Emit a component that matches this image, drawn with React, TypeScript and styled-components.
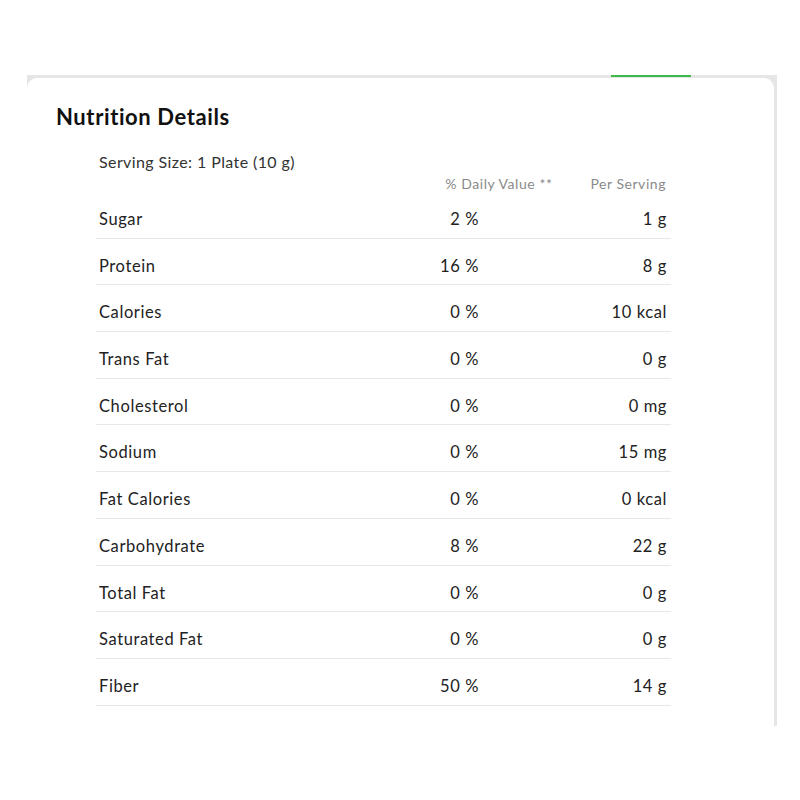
import styled, { createGlobalStyle } from 'styled-components';

const GlobalStyle = createGlobalStyle`
  html, body { margin: 0; padding: 0; background: #ffffff; }
  body { font-family: Lato, "Open Sans", Arial, sans-serif; color: #222; }
`;

const Frame = styled.div`
  position: relative;
  margin: 75px 0 0 27px;
  width: 750px;
  height: 651px;
  box-sizing: border-box;
  padding: 3px 3px 0 0;
  background: #e6e6e6;
`;

const TabIndicator = styled.div`
  position: absolute;
  top: 0;
  left: 584px;
  width: 80px;
  height: 2px;
  background: #3cb94a;
`;

const Card = styled.div`
  height: 100%;
  background: #ffffff;
  border-radius: 10px 10px 0 0;
  padding: 25px 0 0 29px;
  box-sizing: border-box;
`;

const Title = styled.h2`
  margin: 0;
  font-size: 22px;
  line-height: 28px;
  font-weight: 700;
  letter-spacing: 0.6px;
  color: #111;
`;

const Table = styled.div`
  width: 575px;
  margin: 21px 0 0 40px;
`;

const ServingSize = styled.div`
  padding-left: 3px;
  font-size: 16px;
  line-height: 20px;
  letter-spacing: 0.4px;
  color: #333;
`;

const HeaderRow = styled.div`
  display: flex;
  justify-content: flex-end;
  gap: 38px;
  padding: 0 5px 0 0;
  margin-top: 4px;
  font-size: 14px;
  line-height: 16px;
  letter-spacing: 0.55px;
  color: #8a8a8a;
`;

const Row = styled.div`
  display: grid;
  grid-template-columns: 1fr 120px 188px;
  box-sizing: border-box;
  height: 46.7px;
  padding: 17px 4px 0 3px;
  border-bottom: 1px solid #e8e8e8;
  font-size: 16.5px;
  line-height: 20px;
  letter-spacing: 0.6px;
  color: #222;
`;

const Cell = styled.span<{ $align?: 'left' | 'right' }>`
  text-align: ${({ $align }) => $align ?? 'left'};
`;

const rows: [string, string, string][] = [
  ['Sugar', '2 %', '1 g'],
  ['Protein', '16 %', '8 g'],
  ['Calories', '0 %', '10 kcal'],
  ['Trans Fat', '0 %', '0 g'],
  ['Cholesterol', '0 %', '0 mg'],
  ['Sodium', '0 %', '15 mg'],
  ['Fat Calories', '0 %', '0 kcal'],
  ['Carbohydrate', '8 %', '22 g'],
  ['Total Fat', '0 %', '0 g'],
  ['Saturated Fat', '0 %', '0 g'],
  ['Fiber', '50 %', '14 g'],
];

export default function App() {
  return (
    <>
      <GlobalStyle />
      <Frame>
        <TabIndicator />
        <Card>
          <Title>Nutrition Details</Title>
          <Table>
            <ServingSize>Serving Size: 1 Plate (10 g)</ServingSize>
            <HeaderRow>
              <span>% Daily Value **</span>
              <span>Per Serving</span>
            </HeaderRow>
            {rows.map(([name, dv, amount]) => (
              <Row key={name}>
                <Cell>{name}</Cell>
                <Cell $align="right">{dv}</Cell>
                <Cell $align="right">{amount}</Cell>
              </Row>
            ))}
          </Table>
        </Card>
      </Frame>
    </>
  );
}
